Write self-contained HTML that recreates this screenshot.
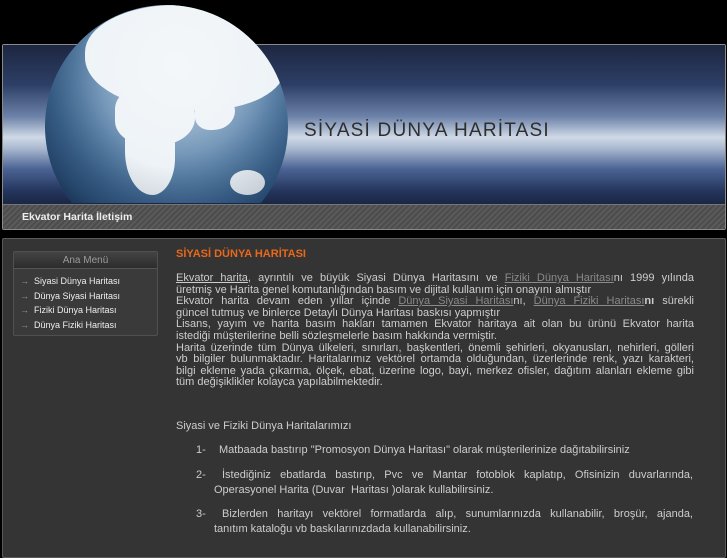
<!DOCTYPE html>
<html><head><meta charset="utf-8">
<style>
*{margin:0;padding:0;box-sizing:border-box}
body{width:727px;height:545px;background:#000;overflow:hidden;position:relative;font-family:"Liberation Sans",sans-serif}
#banner{position:absolute;left:2px;top:44px;width:724px;height:186px;border:1px solid #8a8a8a;border-radius:2px;overflow:hidden}
#img{position:absolute;left:0;top:0;width:722px;height:159px;background:linear-gradient(180deg,#1d2640 0%,#2d3f66 25%,#6d82a8 45%,#cfd9e6 58%,#aab9d0 65%,#4b6394 78%,#24355c 92%,#1a2644 100%)}
#nav{position:absolute;left:0;top:159px;width:722px;height:26px;background:repeating-linear-gradient(135deg,#5a5a5a 0 2px,#4c4c4c 2px 4px);border-top:1px solid #777}
#nav span{position:absolute;left:19px;top:6px;color:#eee;font-weight:bold;font-size:10.5px}
#title{position:absolute;left:304px;top:120px;font-size:19px;color:#2e2e2e;letter-spacing:1.2px}
#gw{position:absolute;left:45px;top:5px;width:243px;height:198px;overflow:hidden}
#globe{position:absolute;left:0;top:0;width:243px;height:243px;border-radius:50%;overflow:hidden;background:radial-gradient(circle at 55% 30%,#a9c2d8 0,#6f93b6 35%,#3a618a 60%,#1d3d62 82%,#0e223c 100%)}
.l{position:absolute;background:#eef3f7;border-radius:50%}
#title,#gw{z-index:2}
#content{position:absolute;left:2px;top:238px;width:724px;height:320px;background:#343434;border:1px solid #5a5a5a;border-radius:2px}
#menu{position:absolute;left:13px;top:251px;width:145px;height:85px;border:1px solid #505050;border-radius:2px;background:#3a3a3a}
#mh{height:17px;background:linear-gradient(#444,#2c2c2c);border-bottom:1px solid #555;text-align:center;color:#9a9a9a;font-size:10px;line-height:17px}
#menu ul{list-style:none;padding-top:5px}
#menu li{font-size:9px;color:#eee;height:14.5px;line-height:14.5px;padding-left:6px}
#menu li b{color:#999;font-weight:normal;margin-right:5px}
#h{position:absolute;left:176px;top:248px;color:#e8681c;font-weight:bold;font-size:11px}
#txt{position:absolute;left:176px;top:273px;width:518px;color:#cdcdcd;font-size:11px;line-height:11.6px}
.j{text-align:justify;text-align-last:justify}
a{color:#8a8a8a;text-decoration:underline}
.a1{color:#cdcdcd}
.p{position:absolute;color:#cdcdcd;font-size:11px;line-height:15px}
</style></head><body>
<div id="banner"><div id="img"></div><div id="nav"><span>Ekvator Harita İletişim</span></div></div>
<div id="gw"><div id="globe">
<div class="l" style="left:40px;top:0px;width:200px;height:105px;border-radius:45% 55% 40% 50%"></div>
<div class="l" style="left:70px;top:80px;width:80px;height:60px;border-radius:40% 50% 45% 40%"></div>
<div class="l" style="left:80px;top:110px;width:50px;height:80px;border-radius:30% 40% 50% 60%"></div>
<div class="l" style="left:150px;top:90px;width:40px;height:35px;border-radius:30% 50% 60% 40%"></div>
<div class="l" style="left:185px;top:165px;width:35px;height:25px"></div>
<div style="position:absolute;inset:0;border-radius:50%;background:radial-gradient(circle at 55% 25%,rgba(255,255,255,.35) 0,rgba(255,255,255,0) 45%,rgba(10,30,60,.2) 70%,rgba(5,15,35,.7) 100%)"></div>
</div></div>
<div id="title">SİYASİ DÜNYA HARİTASI</div>
<div id="content"></div>
<div id="menu"><div id="mh">Ana Menü</div><ul>
<li><b>→</b>Siyasi Dünya Haritası</li><li><b>→</b>Dünya Siyasi Haritası</li><li><b>→</b>Fiziki Dünya Haritası</li><li><b>→</b>Dünya Fiziki Haritası</li></ul></div>
<div id="h">SİYASİ DÜNYA HARİTASI</div>
<div id="txt">
<div class="j"><a class="a1">Ekvator harita</a>, ayrıntılı ve büyük Siyasi Dünya Haritasını ve <a>Fiziki Dünya Haritası</a>nı 1999 yılında</div>
<div>üretmiş ve Harita genel komutanlığından basım ve dijital kullanım için onayını almıştır</div>
<div class="j">Ekvator harita devam eden yıllar içinde <a>Dünya Siyasi Haritası</a>nı, <a>Dünya Fiziki Haritası</a><b>nı</b> sürekli</div>
<div>güncel tutmuş ve binlerce Detaylı Dünya Haritası baskısı yapmıştır</div>
<div class="j">Lisans, yayım ve harita basım hakları tamamen Ekvator haritaya ait olan bu ürünü Ekvator harita</div>
<div>istediği müşterilerine belli sözleşmelerle basım hakkında vermiştir.</div>
<div class="j">Harita üzerinde tüm Dünya ülkeleri, sınırları, başkentleri, önemli şehirleri, okyanusları, nehirleri, gölleri</div>
<div class="j">vb bilgiler bulunmaktadır. Haritalarımız vektörel ortamda olduğundan, üzerlerinde renk, yazı karakteri,</div>
<div class="j">bilgi ekleme yada çıkarma, ölçek, ebat, üzerine logo, bayi, merkez ofisler, dağıtım alanları ekleme gibi</div>
<div>tüm değişiklikler kolayca yapılabilmektedir.</div>
</div>
<div class="p" style="left:176px;top:419px">Siyasi ve Fiziki Dünya Haritalarımızı</div>
<div class="p" style="left:196px;top:443px">1-</div>
<div class="p" style="left:219px;top:443px">Matbaada bastırıp "Promosyon Dünya Haritası" olarak müşterilerinize dağıtabilirsiniz</div>
<div class="p" style="left:196px;top:468px">2-</div>
<div class="p j" style="left:222px;top:468px;width:471px">İstediğiniz ebatlarda bastırıp, Pvc ve Mantar fotoblok kaplatıp, Ofisinizin duvarlarında,</div>
<div class="p" style="left:214px;top:483px">Operasyonel Harita (Duvar&nbsp; Haritası )olarak kullabilirsiniz.</div>
<div class="p" style="left:196px;top:507px">3-</div>
<div class="p j" style="left:222px;top:507px;width:471px">Bizlerden haritayı vektörel formatlarda alıp, sunumlarınızda kullanabilir, broşür, ajanda,</div>
<div class="p" style="left:214px;top:522px">tanıtım kataloğu vb baskılarınızdada kullanabilirsiniz.</div>
</body></html>
